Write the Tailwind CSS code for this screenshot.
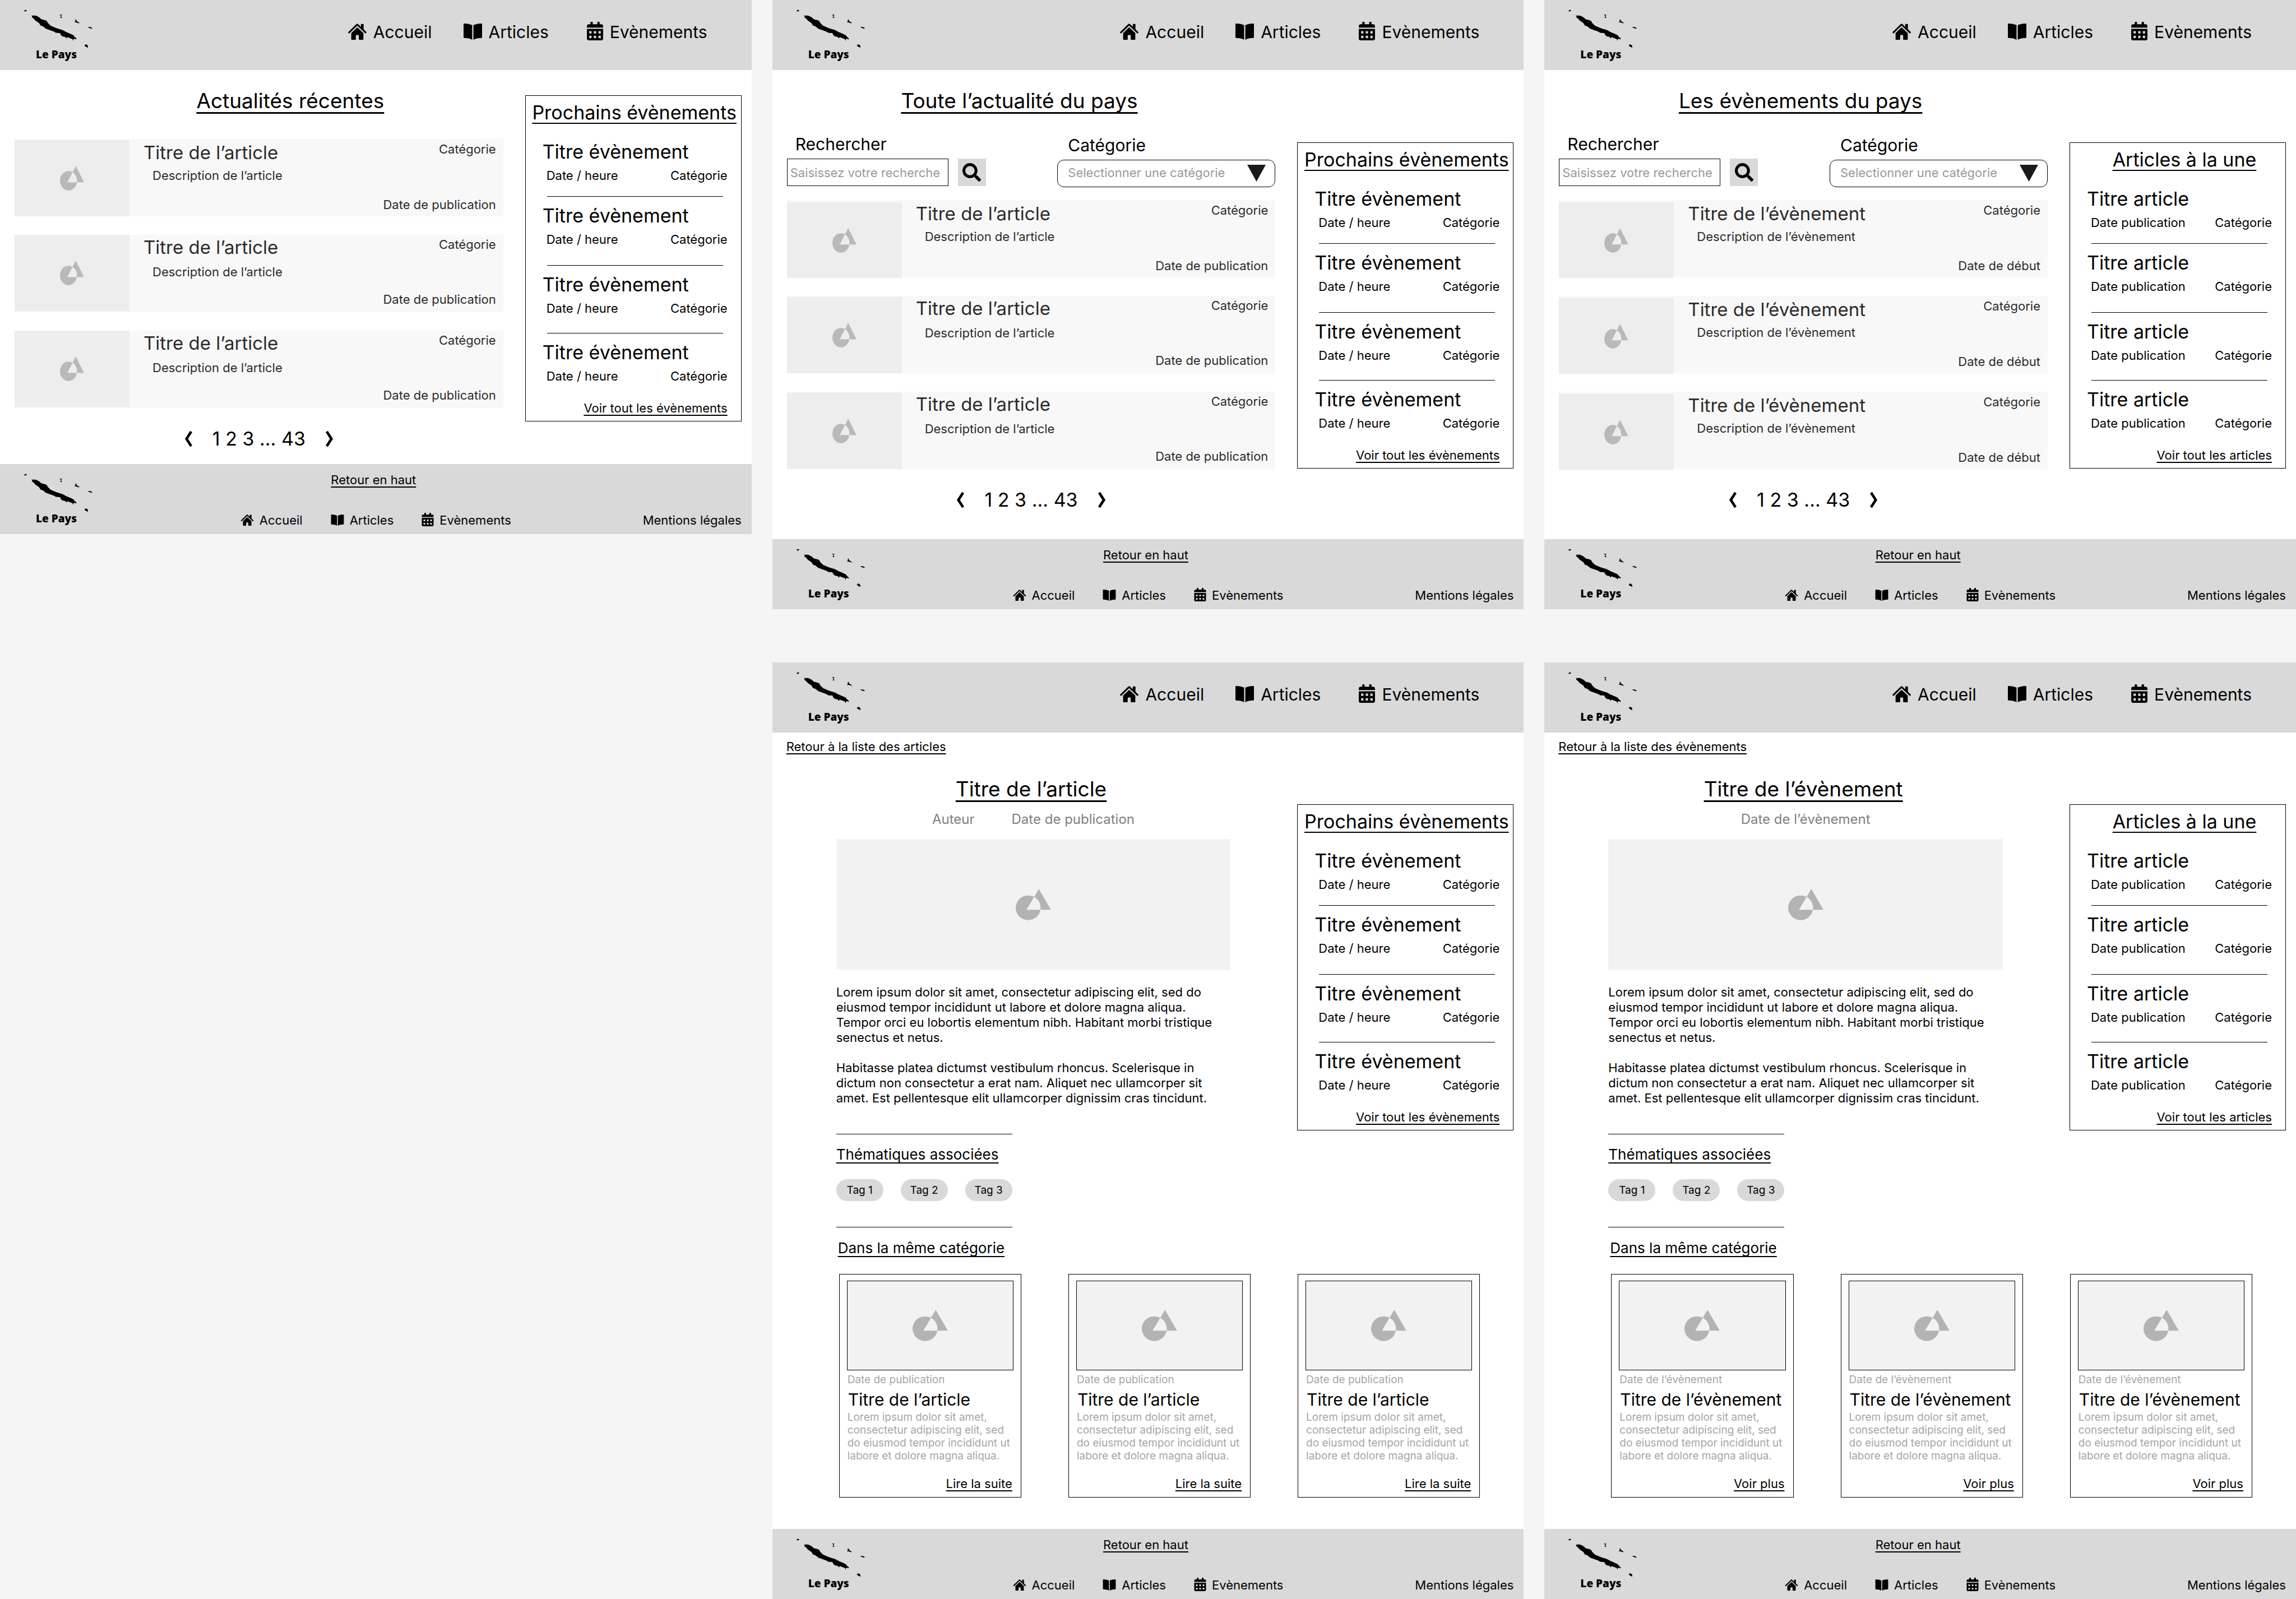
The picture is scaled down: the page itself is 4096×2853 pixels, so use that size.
<!DOCTYPE html>
<html lang="fr">
<head>
<meta charset="utf-8">
<meta name="viewport" content="width=device-width, initial-scale=1">
<title>Le Pays – maquettes</title>
<script src="https://cdn.jsdelivr.net/npm/@tailwindcss/browser@4"></script>
</head>
<body class="bg-[#f5f5f5] font-['Inter',sans-serif] text-[22px] leading-[27px] text-black">

<svg class="hidden" aria-hidden="true">
  <symbol id="i-home" viewBox="0 0 105 92">
    <path d="M1 52Q-1 50 1 48L47 3Q52 -2 57 3L73 18V4Q73 2 75 2H86Q88 2 88 4V32L104 48Q106 50 104 52L101 55Q99 57 97 55L52 12L8 55Q6 57 4 55Z"/>
    <path d="M52 21L87 54V89Q87 92 84 92H64Q61 92 61 89V68Q61 65 58 65H47Q44 65 44 68V89Q44 92 41 92H21Q18 92 18 89V54Z"/>
  </symbol>
  <symbol id="i-book" viewBox="0 0 105 92">
    <path d="M0 4Q0 0 4 0C22 1 38 3 49 9V92C37 85 22 83 4 82Q0 82 0 78Z"/>
    <path d="M105 4Q105 0 101 0C83 1 67 3 56 9V92C68 85 83 83 101 82Q105 82 105 78Z"/>
  </symbol>
  <symbol id="i-calendar" viewBox="0 0 448 512">
    <path fill-rule="evenodd" d="M0 464c0 26.500 21.500 48 48 48h352c26.500 0 48-21.500 48-48V192H0zM320 256h64v64h-64zM320 384h64v64h-64zM192 256h64v64h-64zM192 384h64v64h-64zM64 256h64v64H64zM64 384h64v64H64zM400 64h-48V12c0-6.600-5.400-12-12-12h-40c-6.600 0-12 5.400-12 12v52H160V12c0-6.600-5.400-12-12-12h-40c-6.600 0-12 5.400-12 12v52H48C21.500 64 0 85.500 0 112v48h448v-48c0-26.500-21.500-48-48-48z"/>
  </symbol>
  <symbol id="i-search" viewBox="0 0 512 512">
    <path d="M505 442.700L405.300 343c-4.500-4.500-10.600-7-17-7H372c27.600-35.300 44-79.700 44-128C416 93.100 322.900 0 208 0S0 93.100 0 208s93.100 208 208 208c48.300 0 92.700-16.400 128-44v16.300c0 6.400 2.500 12.500 7 17l99.700 99.700c9.400 9.400 24.600 9.400 33.900 0l28.300-28.300c9.400-9.400 9.400-24.600.1-34zM208 336c-70.700 0-128-57.200-128-128 0-70.700 57.200-128 128-128 70.700 0 128 57.200 128 128 0 70.700-57.200 128-128 128z"/>
  </symbol>
  <symbol id="i-prev" viewBox="0 0 15 30"><path d="M13 1L4 15L13 29" fill="none" stroke="currentColor" stroke-width="5"/></symbol>
  <symbol id="i-next" viewBox="0 0 15 30"><path d="M2 1L11 15L2 29" fill="none" stroke="currentColor" stroke-width="5"/></symbol>
  <symbol id="i-image" viewBox="0 0 68 60" preserveAspectRatio="none">
    <path fill-rule="evenodd" d="M24 12.500a24 23.600 0 1 0 0 47.200a24 23.600 0 1 0 0-47.200zM44.600 0L67.800 39.800H20.800z"/>
  </symbol>
  <symbol id="i-islands" viewBox="80 55 392 218">
    <path d="M80 62L86 57L96 58L92 64L84 66ZM120 85L127 89L146 89L158 95L165 98L180 111L198 115L210 120L215 130L232 147L252 156L270 163L300 172L322 184L345 194L362 202L372 214L381 221L376 227L370 222L363 224L362 235L357 224L340 218L327 213L322 221L317 212L300 209L290 200L286 190L270 189L262 188L250 181L225 172L205 165L188 151L174 146L166 133L145 118L135 107L124 98L127 92ZM281 85L299 83L294 87L294 98L299 102L286 103L291 96L289 88ZM374 112L379 112L381 120L396 130L396 134L384 130L368 127L374 122ZM447 154L460 155L471 161L470 165L458 162L447 157ZM425 262L433 254L441 257L446 264L446 273L437 270Z"/>
  </symbol>
</svg>

<div id="board" class="grid grid-cols-3 items-start gap-x-[37px] gap-y-[95px]"></div>

<script>
const icon = (name, cls) => `<svg class="${cls} shrink-0 fill-current" aria-hidden="true"><use href="#i-${name}"/></svg>`;
const lineLink = 'underline decoration-2 underline-offset-[4px] [text-decoration-skip-ink:none]';
const pageTitle = 'text-[37px] leading-[44px] underline decoration-[3px] underline-offset-[7px] [text-decoration-skip-ink:none]';

const logo = () => `
  <a href="#" class="flex w-[165px] flex-col pt-[17px] pb-4 pl-[43px]">
    ${icon('islands', 'h-[68px] w-[122px]')}
    <span class="pl-[21px] font-['Open_Sans',sans-serif] text-[19px] leading-6 font-extrabold whitespace-nowrap">Le Pays</span>
  </a>`;

const header = () => `
  <header class="flex items-start justify-between bg-[#d9d9d9] pr-[79px]">
    ${logo()}
    <nav class="flex gap-14 pt-[39px] text-[30px] leading-9">
      <a href="#" class="flex gap-3">${icon('home', 'mt-[3px] h-[29px] w-[33px]')}Accueil</a>
      <a href="#" class="flex gap-3">${icon('book', 'mt-[3px] h-[29px] w-[33px]')}Articles</a>
      <a href="#" class="ml-3 flex gap-3">${icon('calendar', 'h-[33px] w-[29px]')}Evènements</a>
    </nav>
  </header>`;

const footer = () => `
  <footer class="grid grid-cols-[1fr_auto_1fr] bg-[#d9d9d9]">
    ${logo()}
    <div class="flex flex-col justify-between pt-[15px] pb-[11px]">
      <a href="#" class="mr-2 self-center ${lineLink}">Retour en haut</a>
      <nav class="flex gap-[50px]">
        <a href="#" class="flex gap-[10px]">${icon('home', 'mt-[3px] h-5 w-6')}Accueil</a>
        <a href="#" class="flex gap-[10px]">${icon('book', 'mt-[3px] h-5 w-6')}Articles</a>
        <a href="#" class="flex gap-[10px]">${icon('calendar', 'h-6 w-[22px]')}Evènements</a>
      </nav>
    </div>
    <a href="#" class="self-end justify-self-end pr-[18px] pb-[11px]">Mentions légales</a>
  </footer>`;

const asideItem = (title, date, cls) => `
  <li class="${cls}">
    <h3 class="pl-[30px] text-[34px] leading-[41px]">${title}</h3>
    <p class="mt-[9px] flex justify-between pr-6 pl-[37px]"><span>${date}</span><span>Catégorie</span></p>
  </li>`;

const aside = (kind, mt) => {
  const ev = kind === 'events';
  const t = ev ? 'Titre évènement' : 'Titre article';
  const d = ev ? 'Date / heure' : 'Date publication';
  const rule = '<li class="mr-8 ml-[38px] border-t border-black" role="separator"></li>';
  return `
  <aside class="${mt} w-[386px] shrink-0 self-start border border-black pt-[9px] pb-[9px]">
    <h2 class="${ev ? 'pl-1' : 'pl-6'} text-center text-[34px] leading-[41px] whitespace-nowrap underline decoration-2 underline-offset-[6px]">${ev ? 'Prochains évènements' : 'Articles à la une'}</h2>
    <ul class="mt-[29px]">
      ${asideItem(t, d, 'pb-[23px]')}${rule}
      ${asideItem(t, d, 'pt-[13px] pb-8')}${rule}
      ${asideItem(t, d, 'pt-[13px] pb-[30px]')}${rule}
      ${asideItem(t, d, 'pt-[13px]')}
    </ul>
    <p class="mt-[30px] pr-6 text-right"><a href="#" class="${lineLink}">${ev ? 'Voir tout les évènements' : 'Voir tout les articles'}</a></p>
  </aside>`;
};

const listCard = (what, date, imgTop, tight) => `
  <li class="flex h-[138px] items-start bg-[#f8f8f8] text-[#2b2b2b]">
    <div class="${imgTop} flex h-[136px] w-[205px] shrink-0 items-center justify-center bg-black/[0.045] text-[#b9b9b9]">${icon('image', 'h-11 w-[43px]')}</div>
    <div class="flex-1 ${tight ? 'pt-[2px]' : 'pt-1'} pl-[25px]">
      <h3 class="text-[33px] leading-[41px]">Titre de ${what}</h3>
      <p class="${tight ? 'mt-[10px]' : 'mt-[7px]'} pl-4">Description de ${what}</p>
    </div>
    <div class="flex h-full flex-col justify-between ${tight ? 'pt-1 pb-[9px]' : 'pt-[5px] pb-[7px]'} pr-[13px] text-right"><span>Catégorie</span><span>${date}</span></div>
  </li>`;

const pagination = () => `
  <nav class="mt-[34px] flex items-center justify-center gap-9 text-[34px] leading-[41px]" aria-label="Pagination">
    <a href="#" aria-label="Précédent">${icon('prev', 'h-7 w-[14px]')}</a>
    <span><a href="#">1</a> <a href="#">2</a> <a href="#">3</a> ... <a href="#">43</a></span>
    <a href="#" aria-label="Suivant">${icon('next', 'h-7 w-[14px]')}</a>
  </nav>`;

const search = (id) => `
  <form class="mt-[37px] mb-[23px] flex items-start justify-between">
    <div>
      <label for="q-${id}" class="block pl-[15px] text-[30px] leading-9">Rechercher</label>
      <div class="mt-2 flex">
        <input id="q-${id}" type="text" placeholder="Saisissez votre recherche" class="h-[49px] w-[288px] border border-black bg-white pl-[5px] placeholder:text-[#999]">
        <button type="button" aria-label="Rechercher" class="ml-[17px] flex h-[49px] w-[50px] items-center justify-center bg-[#d9d9d9]">${icon('search', 'h-[33px] w-[33px]')}</button>
      </div>
    </div>
    <div class="pt-[2px]">
      <label for="c-${id}" class="block pl-[19px] text-[30px] leading-9">Catégorie</label>
      <div class="relative mt-2">
        <select id="c-${id}" class="block h-[49px] w-[389px] appearance-none rounded-xl border border-black bg-white pb-[2px] pl-[18px] text-[#999]"><option>Selectionner une catégorie</option></select>
        <svg class="pointer-events-none absolute top-[9px] right-[17px] h-[30px] w-[33px] fill-[#1a1a1a]" viewBox="0 0 33 30" aria-hidden="true"><path d="M0 0H33L16.500 30Z"/></svg>
      </div>
    </div>
  </form>`;

const listFrame = ({ id, title, shift, what, date, imgs, tights, withSearch, asideKind, asideTop, pad }) => `
  <section class="bg-white">
    ${header()}
    <main class="flex gap-[39px] pr-[18px] pl-[26px]">
      <div class="flex-1 pt-[33px] ${pad}">
        <h1 class="${shift} text-center"><span class="${pageTitle}">${title}</span></h1>
        ${withSearch ? search(id) : ''}
        <ul class="${withSearch ? '' : 'mt-[46px]'} flex flex-col gap-[33px]">${imgs.map((m, i) => listCard(what, date, m, tights[i])).join('')}</ul>
        ${pagination()}
      </div>
      ${aside(asideKind, asideTop)}
    </main>
    ${footer()}
  </section>`;

const relatedCard = (what, date, more) => `
  <article class="border border-black px-[13px] pt-[11px] pb-[10px]">
    <div class="flex h-40 items-center justify-center border border-black bg-[#f2f2f2] text-[#b3b3b3]">${icon('image', 'h-14 w-[63px]')}</div>
    <p class="mt-[5px] pl-px text-[19px] leading-[23px] text-[#a6a6a6]">${date}</p>
    <h3 class="mt-[6px] pl-[2px] text-[30px] leading-9 whitespace-nowrap">Titre de ${what}</h3>
    <p class="mt-[2px] pl-px text-[19px] leading-[23px] text-[#a6a6a6]">Lorem ipsum dolor sit amet, consectetur adipiscing elit, sed do eiusmod tempor incididunt ut labore et dolore magna aliqua.</p>
    <p class="mt-[25px] pr-[2px] text-right"><a href="#" class="${lineLink}">${more}</a></p>
  </article>`;

const sectionTitle = 'text-[26px] leading-[31px] underline decoration-2 underline-offset-[5px] [text-decoration-skip-ink:none]';

const detailFrame = ({ back, what, meta, date, more, asideKind }) => `
  <section class="bg-white">
    ${header()}
    <main class="pb-14">
      <div class="flex gap-[39px] pr-[18px]">
        <article class="flex-1">
          <p class="pt-3 pl-[25px]"><a href="#" class="${lineLink}">${back}</a></p>
          <div class="mt-10 pr-20 pl-[114px]">
            <h1 class="pr-2 text-center"><span class="${pageTitle}">Titre de ${what}</span></h1>
            <p class="mt-[17px] flex justify-center gap-[66px] text-[24px] leading-[29px] text-[#808080]">${meta.map(m => `<span>${m}</span>`).join('')}</p>
            <div class="mt-[21px] flex h-[233px] items-center justify-center bg-[#f2f2f2] text-[#b3b3b3]">${icon('image', 'h-14 w-[63px]')}</div>
            <p class="mt-[27px]">Lorem ipsum dolor sit amet, consectetur adipiscing elit, sed do eiusmod tempor incididunt ut labore et dolore magna aliqua. Tempor orci eu lobortis elementum nibh. Habitant morbi tristique senectus et netus.</p>
            <p class="mt-[27px]">Habitasse platea dictumst vestibulum rhoncus. Scelerisque in dictum non consectetur a erat nam. Aliquet nec ullamcorper sit amet. Est pellentesque elit ullamcorper dignissim cras tincidunt.</p>
            <div class="mt-[50px] w-[314px] border-y border-black pt-5 pb-[46px]">
              <h2 class="${sectionTitle}">Thématiques associées</h2>
              <ul class="mt-[29px] flex justify-between text-[19px] leading-[23px]">
                ${[1, 2, 3].map(n => `<li><a href="#" class="flex h-[39px] w-[84px] items-center justify-center rounded-full bg-[#d9d9d9]">Tag ${n}</a></li>`).join('')}
              </ul>
            </div>
          </div>
        </article>
        ${aside(asideKind, 'mt-32')}
      </div>
      <div class="mt-[21px] pr-[78px] pl-[119px]">
        <h2 class="${sectionTitle} -ml-[2px]">Dans la même catégorie</h2>
        <div class="mt-[31px] grid grid-cols-3 gap-[84px]">${[1, 2, 3].map(() => relatedCard(what, date, more)).join('')}</div>
      </div>
    </main>
    ${footer()}
  </section>`;

document.getElementById('board').innerHTML = [
  listFrame({ id: 'home', title: 'Actualités récentes', shift: 'pl-28', what: 'l’article', date: 'Date de publication', imgs: ['mt-[2px]', 'mt-0', 'mt-0'], tights: [false, true, true], withSearch: false, asideKind: 'events', asideTop: 'mt-[45px]', pad: 'pb-[25px]' }),
  listFrame({ id: 'articles', title: 'Toute l’actualité du pays', shift: 'pr-[42px]', what: 'l’article', date: 'Date de publication', imgs: ['mt-1', 'mt-[2px]', 'mt-[2px]'], tights: [false, true, true], withSearch: true, asideKind: 'events', asideTop: 'mt-[129px]', pad: 'pb-[50px]' }),
  listFrame({ id: 'events', title: 'Les évènements du pays', shift: 'pr-[10px]', what: 'l’évènement', date: 'Date de début', imgs: ['mt-1', 'mt-1', 'mt-1'], tights: [false, false, false], withSearch: true, asideKind: 'articles', asideTop: 'mt-[129px]', pad: 'pb-[50px]' }),
  '<div></div>',
  detailFrame({ back: 'Retour à la liste des articles', what: 'l’article', meta: ['Auteur', 'Date de publication'], date: 'Date de publication', more: 'Lire la suite', asideKind: 'events' }),
  detailFrame({ back: 'Retour à la liste des évènements', what: 'l’évènement', meta: ['Date de l’évènement'], date: 'Date de l’évènement', more: 'Voir plus', asideKind: 'articles' }),
].join('');
</script>
</body>
</html>
